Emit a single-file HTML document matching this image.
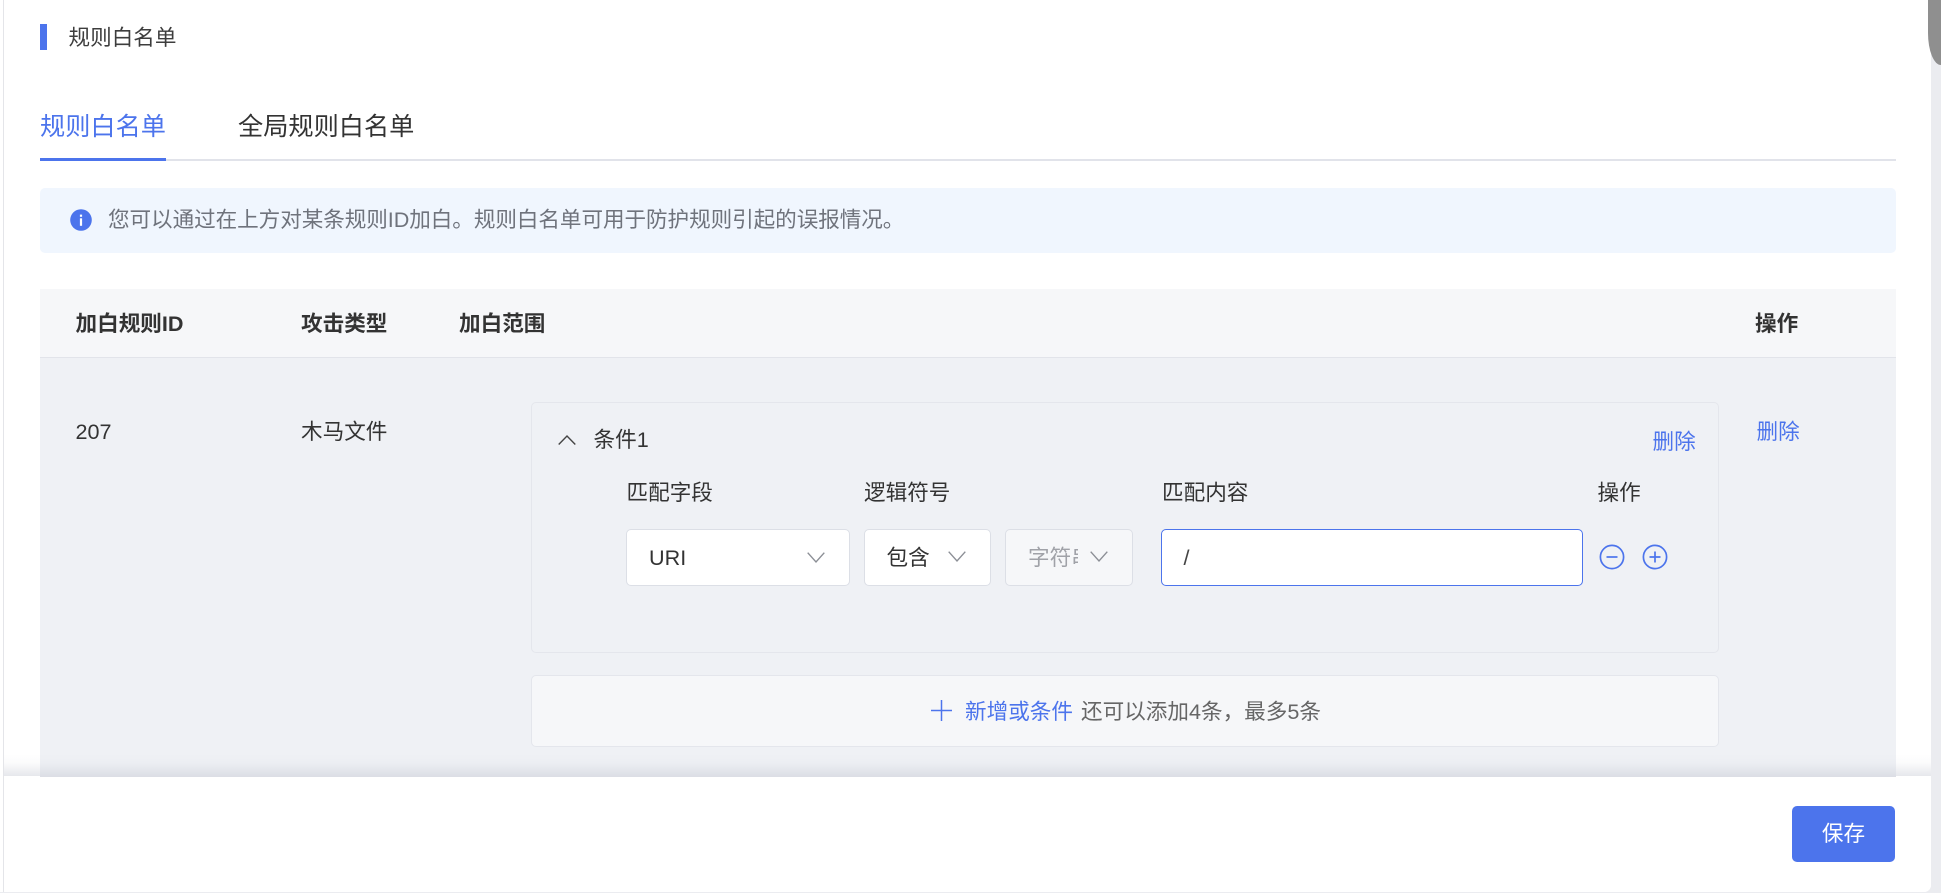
<!DOCTYPE html>
<html lang="zh-CN">
<head>
<meta charset="utf-8">
<title>规则白名单</title>
<style>
*{box-sizing:border-box}
html,body{margin:0;padding:0;width:1941px;height:893px;overflow:hidden;background:#ebecf0}
body{position:relative;font-family:"Liberation Sans","Noto Sans CJK SC",sans-serif;font-size:21.6px;color:#333}
.a{position:absolute}
.t{position:absolute;line-height:40px;height:40px;white-space:nowrap}
.sel{position:absolute;top:529px;height:57px;background:#fff;border:1px solid #dcdfe6;border-radius:5px}
.b{color:#4c74ec}
svg{position:absolute;overflow:visible}
</style>
</head>
<body>
<div class="a" style="left:0;top:0;width:3px;height:893px;background:#fff"></div>
<div class="a" style="left:3px;top:0;width:1px;height:893px;background:#e4e5e9"></div>
<div class="a" style="left:4px;top:0;width:1927px;height:892px;background:#fff;border-radius:0 0 7px 0"></div>
<div class="a" style="left:0;top:892px;width:1931px;height:1px;background:#ebecf0"></div>
<div class="a" style="left:1928px;top:0;width:13px;height:65px;background:#8f8f8f;border-radius:0 0 0 13px / 0 0 0 32px"></div>

<div class="a" style="left:40px;top:24px;width:7px;height:26px;background:#4c74ec"></div>
<div class="t" style="left:68.5px;top:18px;color:#3d3d3d">规则白名单</div>

<div class="t" style="left:40px;top:107px;font-size:25.2px;color:#4c74ec">规则白名单</div>
<div class="t" style="left:238px;top:107px;font-size:25.2px;color:#333">全局规则白名单</div>
<div class="a" style="left:40px;top:159px;width:1856px;height:2px;background:#e1e3ea"></div>
<div class="a" style="left:40px;top:158px;width:126px;height:3px;background:#4c74ec"></div>

<div class="a" style="left:40px;top:188px;width:1856px;height:65px;background:#f0f6fe;border-radius:5px"></div>
<svg style="left:70px;top:209px" width="22" height="22" viewBox="0 0 22 22"><circle cx="11" cy="11" r="10.8" fill="#4c74ec"/><rect x="9.9" y="9.3" width="2.2" height="7.5" fill="#fff"/><rect x="9.9" y="5.6" width="2.2" height="2.2" fill="#fff"/></svg>
<div class="t" style="left:108px;top:200px;color:#6f737c;letter-spacing:-.07px">您可以通过在上方对某条规则ID加白。规则白名单可用于防护规则引起的误报情况。</div>

<div class="a" style="left:40px;top:289px;width:1856px;height:69px;background:#f6f7f9;border-bottom:1px solid #e2e4ea"></div>
<div class="t" style="left:75.5px;top:304px;font-weight:700">加白规则ID</div>
<div class="t" style="left:301px;top:304px;font-weight:700">攻击类型</div>
<div class="t" style="left:459px;top:304px;font-weight:700">加白范围</div>
<div class="t" style="left:1755px;top:304px;font-weight:700">操作</div>

<div class="a" style="left:40px;top:358px;width:1856px;height:418px;background:#eff1f5"></div>
<div class="t" style="left:75.5px;top:412px">207</div>
<div class="t" style="left:301px;top:412px">木马文件</div>
<div class="t b" style="left:1756.5px;top:412px">删除</div>

<div class="a" style="left:531px;top:402px;width:1188px;height:251px;border:1px solid #e4e6ec;border-radius:5px"></div>
<svg style="left:558px;top:435px" width="18" height="10" viewBox="0 0 18 10"><path d="M0.7 9.5 L9 1 L17.3 9.5" fill="none" stroke="#444" stroke-width="1.4"/></svg>
<div class="t" style="left:593.5px;top:420px">条件1</div>
<div class="t b" style="left:1652.5px;top:422px">删除</div>

<div class="t" style="left:626.5px;top:473px">匹配字段</div>
<div class="t" style="left:864px;top:473px">逻辑符号</div>
<div class="t" style="left:1162px;top:473px">匹配内容</div>
<div class="t" style="left:1597.5px;top:473px">操作</div>

<div class="sel" style="left:626px;width:224px"></div>
<div class="t" style="left:649px;top:538px">URI</div>
<svg style="left:807px;top:552px" width="18" height="11" viewBox="0 0 18 11"><path d="M0.7 0.7 L9 10 L17.3 0.7" fill="none" stroke="#8c8f96" stroke-width="1.4"/></svg>

<div class="sel" style="left:864px;width:127px"></div>
<div class="t" style="left:886.5px;top:538px">包含</div>
<svg style="left:948px;top:551px" width="18" height="11" viewBox="0 0 18 11"><path d="M0.7 0.7 L9 10 L17.3 0.7" fill="none" stroke="#8c8f96" stroke-width="1.4"/></svg>

<div class="sel" style="left:1005px;width:128px;background:#f6f7f9"></div>
<div class="t" style="left:1028px;top:538px;width:50px;overflow:hidden;color:#a0a2a8">字符串</div>
<svg style="left:1090px;top:551px" width="18" height="11" viewBox="0 0 18 11"><path d="M0.7 0.7 L9 10 L17.3 0.7" fill="none" stroke="#8c8f96" stroke-width="1.4"/></svg>

<div class="sel" style="left:1161px;width:422px;border-color:#4c74ec"></div>
<div class="t" style="left:1183.5px;top:538px;color:#444">/</div>

<svg style="left:1599px;top:544px" width="26" height="26" viewBox="0 0 26 26"><circle cx="13" cy="13" r="11.6" fill="none" stroke="#4c74ec" stroke-width="1.7"/><path d="M7.5 13 H18.5" stroke="#4c74ec" stroke-width="1.7"/></svg>
<svg style="left:1642px;top:544px" width="26" height="26" viewBox="0 0 26 26"><circle cx="13" cy="13" r="11.6" fill="none" stroke="#4c74ec" stroke-width="1.7"/><path d="M7.5 13 H18.5 M13 7.5 V18.5" stroke="#4c74ec" stroke-width="1.7"/></svg>

<div class="a" style="left:531px;top:675px;width:1188px;height:72px;background:#f6f7f9;border:1px solid #e4e6ec;border-radius:5px"></div>
<svg style="left:931px;top:700px" width="21" height="21" viewBox="0 0 21 21"><path d="M0 10.5 H21 M10.5 0 V21" stroke="#4c74ec" stroke-width="1.5"/></svg>
<div class="t b" style="left:965px;top:692px">新增或条件</div>
<div class="t" style="left:1081px;top:692px;color:#666">还可以添加4条，最多5条</div>

<div class="a" style="left:4px;top:754px;width:1927px;height:22px;background:linear-gradient(to bottom,rgba(190,193,205,0),rgba(190,193,205,.06) 40%,rgba(190,193,205,.38))"></div>
<div class="a" style="left:4px;top:776px;width:36px;height:1px;background:#fff"></div>
<div class="a" style="left:40px;top:776px;width:1856px;height:1px;background:#dcdee5"></div>
<div class="a" style="left:4px;top:777px;width:1927px;height:115px;background:#fff;border-radius:0 0 7px 0"></div>

<div class="a" style="left:1792px;top:806px;width:103px;height:56px;background:#4c74ec;border-radius:5px;color:#fff;text-align:center;line-height:56px">保存</div>
</body>
</html>
